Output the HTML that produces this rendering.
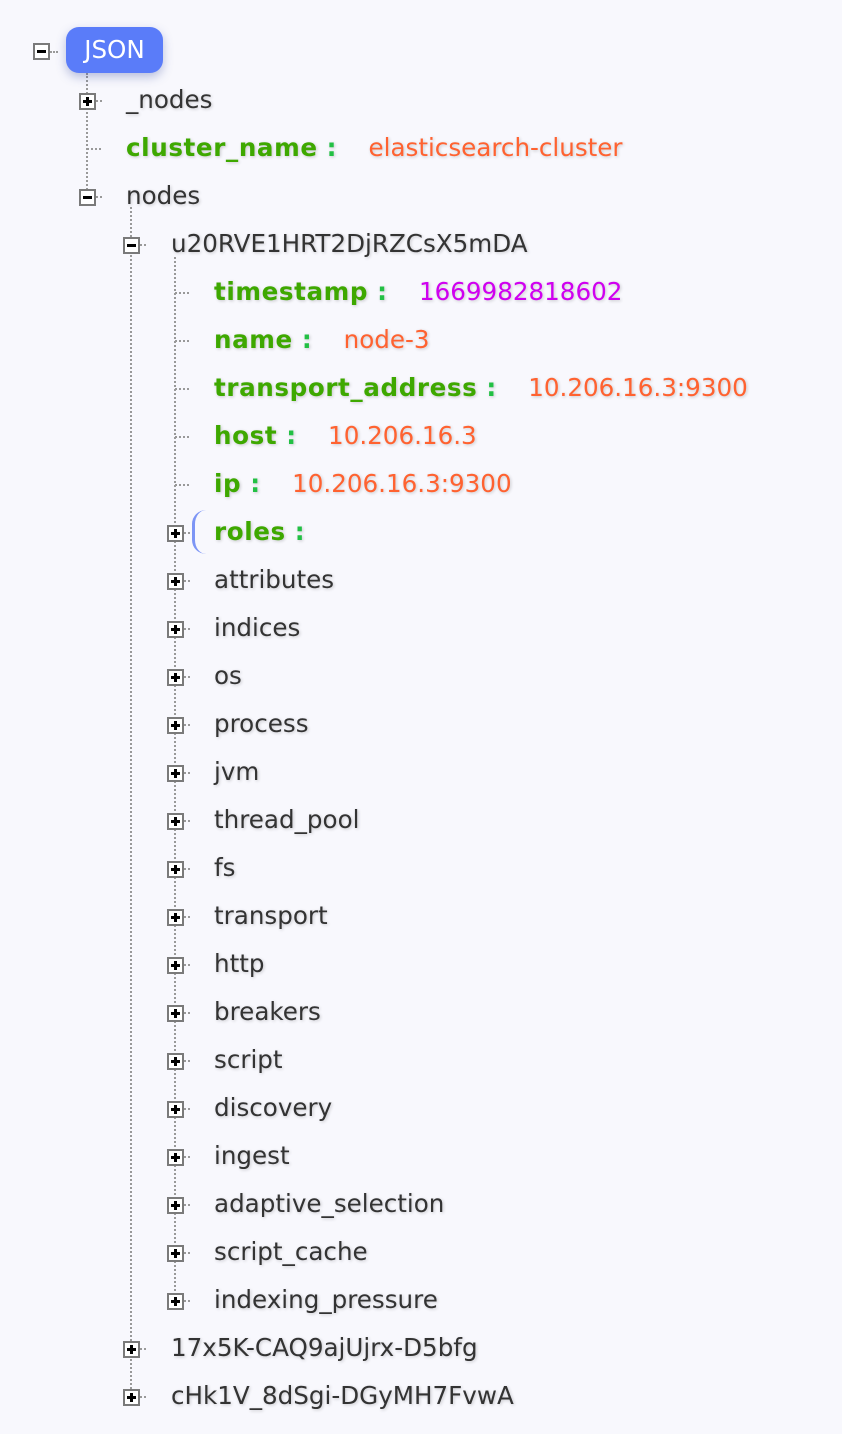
<!DOCTYPE html>
<html><head><meta charset="utf-8"><style>
body{margin:0;width:842px;height:1434px;background:#f8f8fd;font-family:"DejaVu Sans","Liberation Sans",sans-serif;position:relative;overflow:hidden}
.r{position:absolute;height:48px;line-height:48px;font-size:24.6px;color:#333;text-shadow:1px 1px 3px rgba(0,0,0,.2);white-space:nowrap}
.b{position:absolute;width:13px;height:13px;border:2px solid #7a7a7a;background:#fff}
.b:before{content:"";position:absolute;left:2px;top:5px;width:9px;height:3px;background:#000}
.p:after{content:"";position:absolute;left:5px;top:2px;width:3px;height:9px;background:#000}
.h{position:absolute;border-top:2px dotted #999;width:8px}
.v{position:absolute;border-left:2px dotted #999;width:0}
.k{color:#3ea800;font-weight:bold;letter-spacing:0.6px}
.c{color:#22c044;font-weight:bold;margin-left:9px}
.s{color:#ff6230;margin-left:32px}
.n{color:#d000f0;margin-left:32px}
.json{position:absolute;left:66px;top:27px;width:97px;height:46px;border-radius:13px;background:#5a7cf9;color:#fff;font-size:24.6px;line-height:46px;text-align:center;box-shadow:0 4px 10px rgba(60,80,160,.35)}
</style></head><body>
<div class="v" style="left:86px;top:73px;height:124px"></div>
<div class="v" style="left:130px;top:207px;height:1190px"></div>
<div class="v" style="left:174px;top:257px;height:1046px"></div>
<div class="b" style="left:33px;top:43px"></div><div class="h" style="left:50px;top:51px"></div>
<div class="json">JSON</div>
<div id="t"></div>
<script>
var rows=[
[1,'p','_nodes'],[1,'n','<span class="k">cluster_name</span><span class="c">:</span><span class="s">elasticsearch-cluster</span>'],[1,'m','nodes'],
[2,'m','u20RVE1HRT2DjRZCsX5mDA'],
[3,'n','<span class="k">timestamp</span><span class="c">:</span><span class="n">1669982818602</span>'],
[3,'n','<span class="k">name</span><span class="c">:</span><span class="s">node-3</span>'],
[3,'n','<span class="k">transport_address</span><span class="c">:</span><span class="s">10.206.16.3:9300</span>'],
[3,'n','<span class="k">host</span><span class="c">:</span><span class="s">10.206.16.3</span>'],
[3,'n','<span class="k">ip</span><span class="c">:</span><span class="s">10.206.16.3:9300</span>'],
[3,'p','<span class="k">roles</span><span class="c">:</span>'],
[3,'p','attributes'],[3,'p','indices'],[3,'p','os'],[3,'p','process'],[3,'p','jvm'],[3,'p','thread_pool'],[3,'p','fs'],[3,'p','transport'],[3,'p','http'],[3,'p','breakers'],[3,'p','script'],[3,'p','discovery'],[3,'p','ingest'],[3,'p','adaptive_selection'],[3,'p','script_cache'],[3,'p','indexing_pressure'],
[2,'p','17x5K-CAQ9ajUjrx-D5bfg'],[2,'p','cHk1V_8dSgi-DGyMH7FvwA']];
var bx=[0,42,87,131,175],tx=[0,126,171,214],h='';
rows.forEach(function(r,i){var y=101+48*i,l=r[0],x=bx[l+1];
if(r[1]!='n')h+='<div class="b '+(r[1]=='p'?'p':'')+'" style="left:'+(x-8)+'px;top:'+(y-8)+'px"></div><div class="h" style="left:'+(x+9)+'px;top:'+(y-1)+'px;width:6px"></div>';
else h+='<div class="h" style="left:'+(x)+'px;top:'+(y-1)+'px;width:14px"></div>';
h+='<div class="r" style="left:'+tx[l]+'px;top:'+(y-25)+'px">'+r[2]+'</div>';});
h+='<div style="position:absolute;left:192px;top:510px;width:16px;height:44px;border-left:3px solid #7d95f5;border-radius:14px 0 0 14px"></div>';
document.getElementById('t').innerHTML=h;
</script>
</body></html>
